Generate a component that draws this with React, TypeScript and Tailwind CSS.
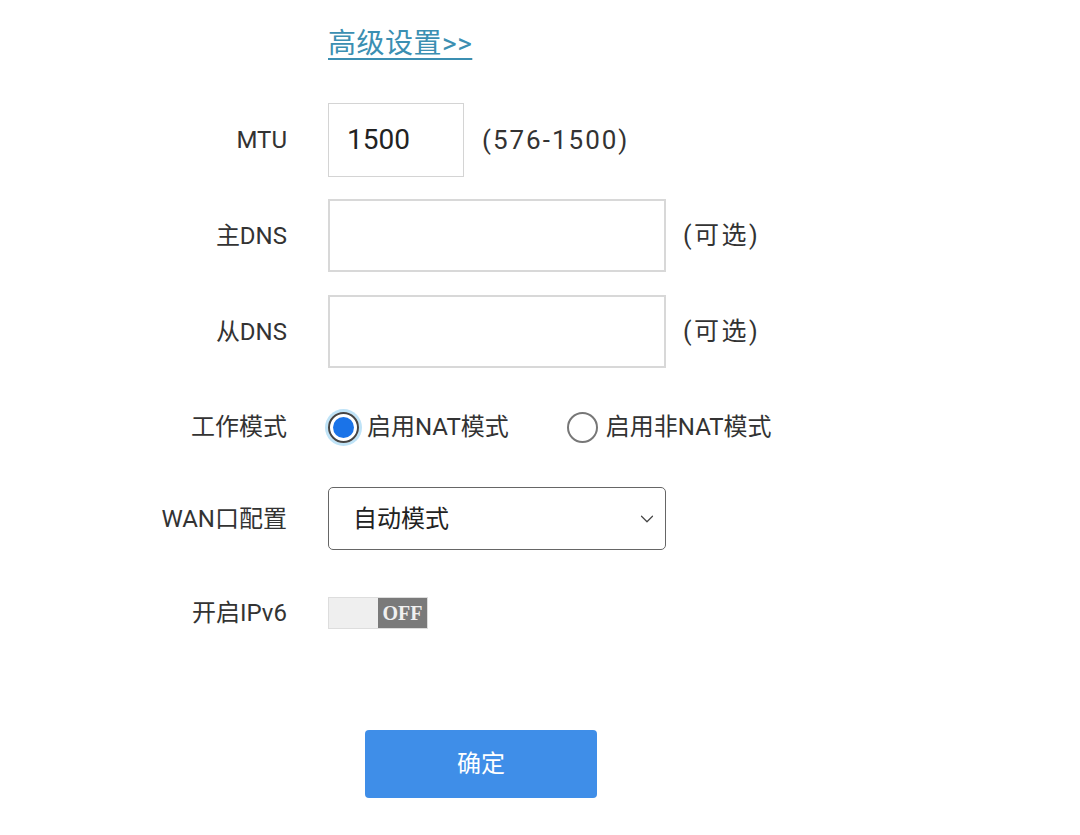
import { ChevronDown } from "lucide-react";

const font = { fontFamily: '"Roboto", "Noto Sans CJK SC", sans-serif' };

function Label({ text }: { text: string }) {
  return (
    <div className="w-[287px] shrink-0 text-right text-[24px] text-[#333]">
      {text}
    </div>
  );
}

function Radio({ checked, label }: { checked?: boolean; label: string }) {
  return (
    <div className="flex items-center gap-[8px]">
      {checked ? (
        <span className="flex h-[31px] w-[31px] items-center justify-center rounded-full border-[2px] border-[#444] ring-[3px] ring-[#bfe3f7]">
          <span className="h-[21px] w-[21px] rounded-full bg-[#1a73e8]" />
        </span>
      ) : (
        <span className="h-[31px] w-[31px] rounded-full border-[2px] border-[#777]" />
      )}
      <span className="text-[24px] text-[#333]">{label}</span>
    </div>
  );
}

export default function App() {
  return (
    <div className="min-h-[835px] w-[1080px] bg-white" style={font}>
      <div className="flex flex-col pt-[28px]">
        <div className="pl-[328px]">
          <a className="text-[28px] leading-[32px] tracking-[0.5px] text-[#3b8fb2] underline decoration-[2px] underline-offset-[5px]">
            高级设置&gt;&gt;
          </a>
        </div>

        <div className="mt-[43px] flex h-[74px] items-center">
          <Label text="MTU" />
          <div className="ml-[41px] flex h-[74px] w-[136px] items-center border border-[#d4d4d4] pl-[18px] text-[28px] text-[#222]">
            1500
          </div>
          <span className="ml-[18px] text-[26px] tracking-[2px] text-[#333]">(576-1500)</span>
        </div>

        <div className="mt-[22px] flex h-[73px] items-center">
          <Label text="主DNS" />
          <div className="ml-[41px] h-[73px] w-[338px] border-[2px] border-[#d8d8d8]" />
          <span className="ml-[17px] text-[25px] tracking-[2.5px] text-[#333]">(可选)</span>
        </div>

        <div className="mt-[23px] flex h-[73px] items-center">
          <Label text="从DNS" />
          <div className="ml-[41px] h-[73px] w-[338px] border-[2px] border-[#d8d8d8]" />
          <span className="ml-[17px] text-[25px] tracking-[2.5px] text-[#333]">(可选)</span>
        </div>

        <div className="mt-[39px] flex h-[40px] items-center">
          <Label text="工作模式" />
          <div className="ml-[41px] flex items-center gap-[58px]">
            <Radio checked label="启用NAT模式" />
            <Radio label="启用非NAT模式" />
          </div>
        </div>

        <div className="mt-[40px] flex h-[63px] items-center">
          <Label text="WAN口配置" />
          <div className="ml-[41px] flex h-[63px] w-[338px] items-center justify-between rounded-[5px] border border-[#666] pl-[24px] pr-[7px]">
            <span className="text-[24px] text-[#222]">自动模式</span>
            <ChevronDown size={22} strokeWidth={1.3} color="#444" />
          </div>
        </div>

        <div className="mt-[47px] flex h-[32px] items-center">
          <Label text="开启IPv6" />
          <div className="ml-[41px] flex h-[32px] w-[100px] border border-[#ddd]">
            <div className="h-full w-[50px] bg-[#efefef]" />
            <div
              className="flex h-full w-[50px] items-center justify-center bg-[#7a7a7a] text-[20px] font-bold text-[#f0f0f0]"
              style={{ fontFamily: '"Liberation Serif", serif' }}
            >
              OFF
            </div>
          </div>
        </div>

        <div className="mt-[101px] pl-[365px]">
          <button className="h-[68px] w-[232px] rounded-[4px] bg-[#3f8ee8] text-[24px] text-white">
            确定
          </button>
        </div>
      </div>
    </div>
  );
}
